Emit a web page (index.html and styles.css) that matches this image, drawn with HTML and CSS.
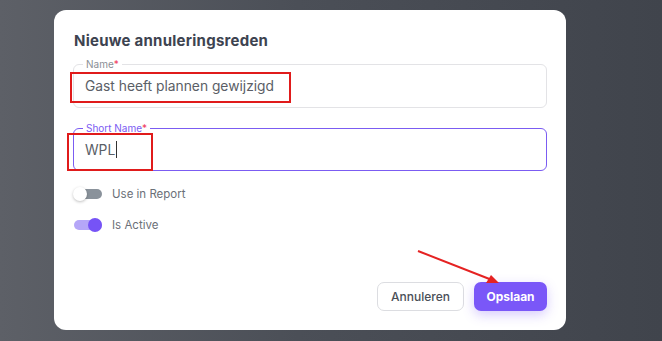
FILE: index.html
```html
<!DOCTYPE html>
<html lang="nl">
<head>
    <meta charset="UTF-8">
    <title>Nieuwe annuleringsreden</title>
    <link rel="stylesheet" href="styles.css">
</head>
<body>

<div class="backdrop">
    <div class="modal">
        <h2 class="modal-title">Nieuwe annuleringsreden</h2>

        <div class="field">
            <span class="field-label">Name<b>*</b></span>
            <div class="field-value">Gast heeft plannen gewijzigd</div>
            <div class="mark mark-name"></div>
        </div>

        <div class="field focused">
            <span class="field-label">Short Name<b>*</b></span>
            <div class="field-value">WPL<span class="caret"></span></div>
            <div class="mark mark-short"></div>
        </div>

        <div class="switches">
            <div class="switch-row">
                <span class="switch"><span class="knob"></span></span>
                <span class="switch-label">Use in Report</span>
            </div>
            <div class="switch-row">
                <span class="switch on"><span class="knob"></span></span>
                <span class="switch-label">Is Active</span>
            </div>
        </div>

        <div class="actions">
            <button class="btn btn-cancel">Annuleren</button>
            <button class="btn btn-save">Opslaan</button>
        </div>

        <svg class="arrow" width="90" height="40" viewBox="0 0 90 40">
            <line x1="2" y1="2" x2="76" y2="31" stroke="#e52222" stroke-width="2"/>
            <polygon points="83,34 70,34 75,26" fill="#e52222"/>
        </svg>
    </div>
</div>

</body>
</html>
```

FILE: styles.css
```css
* {
    box-sizing: border-box;
}

body {
    margin: 0;
    font-family: 'Inter', 'Liberation Sans', sans-serif;
    background: linear-gradient(to right, #5d6067, #4b4f57 45%, #40444c);
    min-height: 100vh;
}

.backdrop {
    padding: 10px 0 0 54px;
}

.modal {
    position: relative;
    width: 512px;
    height: 320px;
    background-color: #fff;
    border-radius: 12px;
    padding: 21px 19px 19px 19px;
    display: flex;
    flex-direction: column;
}

.modal-title {
    margin: 0 0 13px 1px;
    font-size: 15px;
    line-height: 20px;
    font-weight: 700;
    color: #3d4350;
    letter-spacing: 0.25px;
}

.field {
    position: relative;
    height: 44px;
    border: 1px solid #e3e3e6;
    border-radius: 6px;
    margin-bottom: 20px;
    display: flex;
    align-items: center;
    padding: 0 11px;
}

.field.focused {
    border-color: #7b5cf2;
    height: 43px;
    margin-bottom: 0;
}

.field-label {
    position: absolute;
    top: -7px;
    left: 9px;
    padding: 0 3px;
    background: #fff;
    font-size: 10px;
    line-height: 12px;
    color: #8a8e95;
}

.field-label b {
    color: #ef3a5d;
    font-weight: 400;
}

.focused .field-label {
    color: #7b5cf2;
}

.field-value {
    font-size: 13.8px;
    color: #5a5e66;
    display: flex;
    align-items: center;
}

.caret {
    display: inline-block;
    width: 1px;
    height: 17px;
    background: #333;
    margin-left: 1px;
}

.mark {
    position: absolute;
    border: 2px solid #e01b1b;
}

.mark-name {
    left: -4px;
    top: 7px;
    width: 221px;
    height: 31px;
}

.mark-short {
    left: -7px;
    top: 4px;
    width: 86px;
    height: 38px;
}

.switches {
    display: flex;
    flex-direction: column;
    gap: 11px;
    margin-top: 13px;
}

.switch-row {
    display: flex;
    align-items: center;
    height: 20px;
}

.switch {
    position: relative;
    width: 28px;
    height: 10px;
    margin-left: 1px;
    border-radius: 5px;
    background: #8a929b;
    margin-right: 10px;
}

.switch .knob {
    position: absolute;
    left: -1px;
    top: -2px;
    width: 14px;
    height: 14px;
    border-radius: 50%;
    background: #fff;
    box-shadow: 0 1px 3px rgba(0,0,0,0.25);
}

.switch.on {
    background: #b5a6f8;
}

.switch.on .knob {
    left: 14px;
    background: #7653f6;
    box-shadow: none;
}

.switch-label {
    font-size: 11.5px;
    color: #6b7078;
}

.actions {
    margin-top: auto;
    display: flex;
    justify-content: flex-end;
    gap: 10px;
}

.btn {
    height: 29px;
    border-radius: 7px;
    font-family: inherit;
    font-size: 12px;
    padding: 0;
    cursor: pointer;
}

.btn-cancel {
    width: 87px;
    background: #fff;
    border: 1px solid #dcdde1;
    color: #4a4f58;
    font-weight: 500;
}

.btn-save {
    width: 73px;
    border: none;
    background: #7a57f8;
    color: #fff;
    font-weight: 700;
    box-shadow: 0 4px 12px rgba(122,87,248,0.3);
}

.arrow {
    position: absolute;
    left: 362px;
    top: 239px;
}
```
